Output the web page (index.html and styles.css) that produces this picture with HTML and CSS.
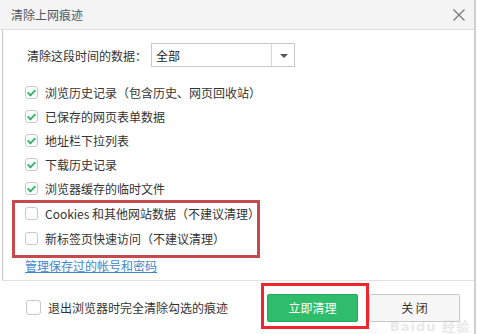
FILE: index.html
```html
<!DOCTYPE html>
<html lang="zh-CN">
<head>
    <meta charset="UTF-8">
    <title>清除上网痕迹</title>
    <link rel="stylesheet" href="styles.css">
</head>
<body>
    <div class="dialog">
        <div class="dialog-header">
            <span class="dialog-title">清除上网痕迹</span>
            <svg class="close-x" width="12" height="12" viewBox="0 0 12 12">
                <path d="M0.5 0.5 L11.5 11.5 M11.5 0.5 L0.5 11.5" stroke="#777" stroke-width="1.2" fill="none"/>
            </svg>
        </div>

        <div class="dialog-body">
            <div class="range-row">
                <span class="range-label">清除这段时间的数据：</span>
                <div class="select">
                    <span class="select-value">全部</span>
                    <span class="select-arrow"></span>
                </div>
            </div>

            <ul class="options">
                <li class="option"><span class="box checked"></span>浏览历史记录（包含历史、网页回收站）</li>
                <li class="option"><span class="box checked"></span>已保存的网页表单数据</li>
                <li class="option"><span class="box checked"></span>地址栏下拉列表</li>
                <li class="option"><span class="box checked"></span>下载历史记录</li>
                <li class="option"><span class="box checked"></span>浏览器缓存的临时文件</li>
                <li class="option wide first-wide"><span class="box"></span>Cookies 和其他网站数据（不建议清理）</li>
                <li class="option wide"><span class="box"></span>新标签页快速访问（不建议清理）</li>
            </ul>

            <a class="manage-link" href="#">管理保存过的帐号和密码</a>

            <div class="mark mark-options"></div>
        </div>

        <div class="dialog-footer">
            <label class="exit-clear"><span class="box big"></span>退出浏览器时完全清除勾选的痕迹</label>
            <div class="actions">
                <button class="btn btn-primary">立即清理</button>
                <button class="btn btn-default">关 闭</button>
            </div>
            <div class="mark mark-button"></div>
            <div class="watermark">Bai<span>du</span> 经验</div>
        </div>
    </div>
</body>
</html>
```

FILE: styles.css
```css
/* base */
body {
    margin: 0;
    background: #fff;
    font-family: "Noto Sans CJK SC", "Noto Sans", sans-serif;
    font-size: 12px;
    color: #333;
}

.dialog {
    width: 474px;
    height: 334px;
    border-right: 2px solid #cfcfcf;
    display: flex;
    flex-direction: column;
    overflow: hidden;
}

/* header */
.dialog-header {
    height: 29px;
    flex-shrink: 0;
    background: #f4f4f4;
    border-bottom: 1px solid #dcdcdc;
    display: flex;
    align-items: center;
    justify-content: space-between;
    padding: 0 9px 0 11px;
}

.dialog-title {
    color: #555;
    font-size: 12px;
}

/* body */
.dialog-body {
    position: relative;
    margin-left: 2px;
    border-left: 1px solid #c4c4c4;
    padding: 13px 0 0 22px;
    height: 251px;
    flex-shrink: 0;
    box-sizing: border-box;
    border-bottom: 1px solid #e2e2e2;
}

.range-row {
    display: flex;
    align-items: center;
    height: 24px;
}

.range-label {
    width: 124px;
    padding-left: 2px;
}

.select {
    width: 142px;
    height: 22px;
    border: 1px solid #c8c8c8;
    display: flex;
    align-items: center;
    background: #fff;
}

.select-value {
    flex: 1;
    padding-left: 4px;
    font-size: 12px;
    color: #222;
}

.select-arrow {
    width: 22px;
    height: 22px;
    border-left: 1px solid #d6d6d6;
    position: relative;
}

.select-arrow::after {
    content: '';
    position: absolute;
    left: 8px;
    top: 10px;
    border-left: 4px solid transparent;
    border-right: 4px solid transparent;
    border-top: 4px solid #555;
}

/* options */
.options {
    list-style: none;
    margin: 13px 0 0;
    padding: 0;
}

.option {
    height: 24px;
    display: flex;
    align-items: center;
}

.option.wide {
    height: 25px;
}

.option.first-wide {
    margin-top: 1px;
}

.box {
    width: 11px;
    height: 11px;
    border: 1px solid #c9c9c9;
    border-radius: 3px;
    background: #fff;
    margin-right: 7px;
    position: relative;
    flex-shrink: 0;
}

.box.checked::after {
    content: '';
    position: absolute;
    left: 3px;
    top: 1px;
    width: 3px;
    height: 6px;
    border-right: 2px solid #3cb46e;
    border-bottom: 2px solid #3cb46e;
    transform: rotate(45deg);
}

.box.big {
    width: 13px;
    height: 13px;
    margin-right: 7px;
}

.manage-link {
    display: inline-block;
    margin-top: 8px;
    color: #3f86c8;
    text-decoration: underline;
    line-height: 14px;
}

/* footer */
.dialog-footer {
    position: relative;
    flex: 1;
    display: flex;
    align-items: center;
    justify-content: space-between;
    padding: 0 14px 0 26px;
}

.exit-clear {
    display: flex;
    align-items: center;
}

.actions {
    display: flex;
    gap: 11px;
}

.btn {
    width: 91px;
    height: 28px;
    font-family: inherit;
    font-size: 12px;
    border-radius: 2px;
    cursor: pointer;
}

.btn-primary {
    background: #2fbd6c;
    border: 1px solid #27a75d;
    color: #fff;
}

.btn-default {
    background: #f6f6f6;
    border: 1px solid #c9c9c9;
    color: #333;
}

/* annotation boxes drawn over the dialog */
.mark {
    position: absolute;
    border: 3px solid #d9444a;
    box-sizing: border-box;
}

.mark-options {
    left: 9px;
    top: 170px;
    width: 248px;
    height: 58px;
    border-color: #c8494d;
}

.mark-button {
    left: 261px;
    top: 2px;
    width: 108px;
    height: 46px;
    border-color: #f0262c;
}

.watermark {
    position: absolute;
    right: 4px;
    bottom: 0;
    line-height: 14px;
    font-family: "DejaVu Sans", sans-serif;
    font-size: 13px;
    font-weight: bold;
    color: rgba(190, 190, 190, 0.35);
    letter-spacing: 1px;
}
```
